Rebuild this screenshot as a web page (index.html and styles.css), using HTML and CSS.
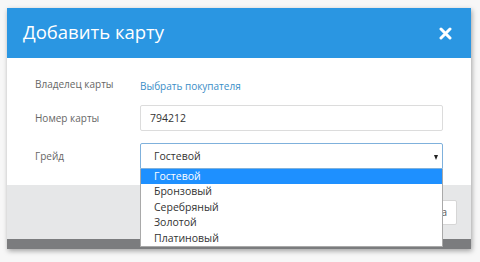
FILE: index.html
```html
<!DOCTYPE html>
<html lang="ru">
<head>
<meta charset="utf-8">
<link rel="stylesheet" href="styles.css">
</head>
<body>
<div class="stage">
  <div class="dialog">
    <div class="dlg-header">
      <h1 class="dlg-title">Добавить карту</h1>
      <svg class="dlg-close" width="13" height="13" viewBox="0 0 13 13"><path d="M2 2L11 11M11 2L2 11" stroke="#fff" stroke-width="3" stroke-linecap="round"/></svg>
    </div>
    <div class="dlg-body">
      <div class="row row-link">
        <div class="label">Владелец карты</div>
        <div class="control"><a class="link">Выбрать покупателя</a></div>
      </div>
      <div class="row row-input">
        <div class="label">Номер карты</div>
        <div class="control"><div class="input">794212</div></div>
      </div>
      <div class="row row-select">
        <div class="label">Грейд</div>
        <div class="control select-wrap">
          <div class="select">Гостевой<span class="arrow"></span></div>
          <ul class="options">
            <li class="option selected">Гостевой</li>
            <li class="option">Бронзовый</li>
            <li class="option">Серебряный</li>
            <li class="option">Золотой</li>
            <li class="option">Платиновый</li>
          </ul>
        </div>
      </div>
    </div>
    <div class="dlg-footer">
      <button class="btn">Отмена</button>
    </div>
    <div class="dlg-bottom"></div>
  </div>
</div>
</body>
</html>
```
FILE: styles.css
```css
* { box-sizing: border-box; }
html, body { margin: 0; padding: 0; }
body {
  background: #f7f7f7;
  font-family: "Open Sans", "Noto Sans", sans-serif;
  width: 480px;
  height: 262px;
  overflow: hidden;
}
.stage {
  padding: 8px 0 0 7px;
}
.dialog {
  width: 464px;
  background: #fff;
  box-shadow: 1px 2px 5px rgba(0,0,0,0.35);
}
.dlg-header {
  height: 50px;
  background: #2a96e2;
  display: flex;
  align-items: center;
  justify-content: space-between;
  padding: 0 19px 0 16px;
}
.dlg-title {
  margin: 0;
  font-weight: 400;
  font-size: 18.5px;
  color: #fff;
  line-height: 1;
  position: relative;
  top: -1px;
}
.dlg-close { display: block; }
.dlg-body {
  padding: 14px 28px 16px 28px;
  display: flex;
  flex-direction: column;
}
.row {
  display: flex;
  align-items: center;
}
.row-link { height: 24px; }
.row-input { margin-top: 9px; }
.row-select { margin-top: 12px; }
.label {
  width: 105px;
  font-size: 10px;
  color: #666;
}
.control { flex: 1; }
.link {
  color: #3a8ec7;
  font-size: 10px;
}
.input, .select {
  height: 26px;
  border: 1px solid #dcdcdc;
  border-radius: 2px;
  font-size: 10.5px;
  color: #333;
  display: flex;
  align-items: center;
  padding-left: 9px;
}
.select-wrap { position: relative; }
.select {
  border-color: #7fb1dc;
  padding-left: 13px;
  position: relative;
  border-radius: 2px 2px 0 0;
}
.arrow {
  position: absolute;
  right: 4px;
  top: 11px;
  width: 0;
  height: 0;
  border-left: 2.5px solid transparent;
  border-right: 2.5px solid transparent;
  border-top: 5px solid #222;
}
.options {
  position: absolute;
  left: 0;
  right: 0;
  top: 26px;
  margin: 0;
  padding: 0;
  list-style: none;
  background: #fff;
  border: 1px solid #a9a9a9;
  border-top: 0;
  z-index: 2;
}
.option {
  height: 15.5px;
  line-height: 15.5px;
  font-size: 10.5px;
  color: #333;
  padding-left: 13px;
}
.option.selected {
  height: 15px;
  line-height: 15px;
  background: #1e90ff;
  color: #fff;
}
.dlg-footer {
  height: 54px;
  background: #e6e7e8;
  display: flex;
  align-items: center;
  justify-content: flex-end;
  padding-right: 14px;
}
.btn {
  height: 25px;
  background: #fff;
  border: 1px solid #d6d6d6;
  border-radius: 2px;
  font-family: inherit;
  font-size: 10px;
  color: #555;
  padding: 0 9px;
}
.dlg-bottom {
  height: 10px;
  background: #7b7c7e;
}
```
